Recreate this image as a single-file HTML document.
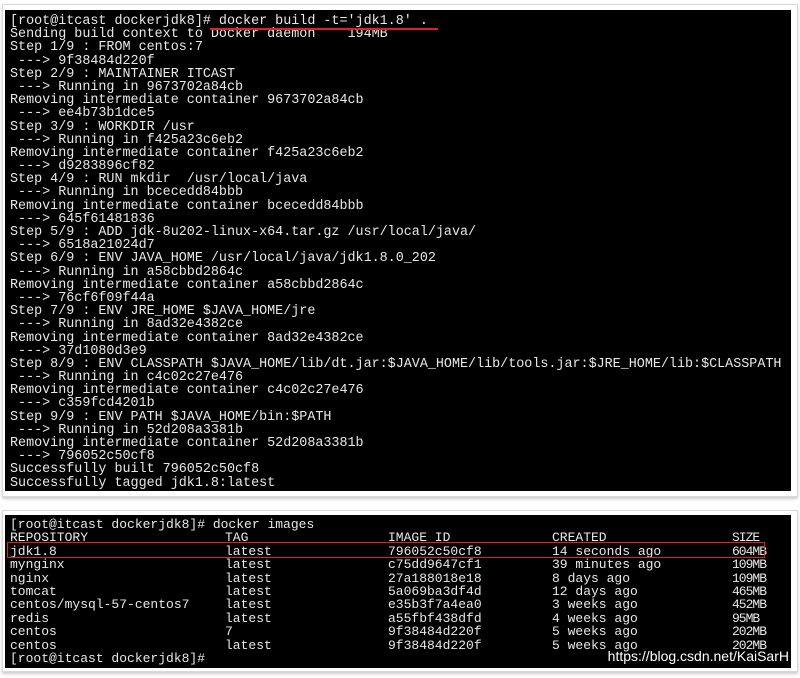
<!DOCTYPE html>
<html><head><meta charset="utf-8"><style>
body{margin:0;width:800px;height:678px;background:#fff;position:relative;overflow:hidden}
.fr{position:absolute;border:1px solid #d8d8d8;box-shadow:0 2px 3px #ccc;background:#fff}
.term{position:absolute;background:#000;color:#e8e8e8;font-family:"Liberation Mono",monospace;white-space:pre}
#t1{left:5px;top:10px;width:786px;height:481px;font-size:13.4px;line-height:13.2px;padding-top:5px;box-sizing:border-box}
#t1 div{padding-left:5px;height:13.2px}
#t2{left:5px;top:515px;width:786px;height:153px;font-size:13px}
.r{position:absolute;height:13.4px;left:0;width:786px}
.r span{position:absolute;top:0}
.r span:nth-child(5){letter-spacing:-1px}
</style></head><body>
<div class="fr" style="left:2px;top:4px;width:794px;height:491px"></div>
<div class="term" id="t1"><div>[root@itcast dockerjdk8]# docker build -t='jdk1.8' .</div><div>Sending build context to Docker daemon    194MB</div><div>Step 1/9 : FROM centos:7</div><div> ---> 9f38484d220f</div><div>Step 2/9 : MAINTAINER ITCAST</div><div> ---> Running in 9673702a84cb</div><div>Removing intermediate container 9673702a84cb</div><div> ---> ee4b73b1dce5</div><div>Step 3/9 : WORKDIR /usr</div><div> ---> Running in f425a23c6eb2</div><div>Removing intermediate container f425a23c6eb2</div><div> ---> d9283896cf82</div><div>Step 4/9 : RUN mkdir  /usr/local/java</div><div> ---> Running in bcecedd84bbb</div><div>Removing intermediate container bcecedd84bbb</div><div> ---> 645f61481836</div><div>Step 5/9 : ADD jdk-8u202-linux-x64.tar.gz /usr/local/java/</div><div> ---> 6518a21024d7</div><div>Step 6/9 : ENV JAVA_HOME /usr/local/java/jdk1.8.0_202</div><div> ---> Running in a58cbbd2864c</div><div>Removing intermediate container a58cbbd2864c</div><div> ---> 76cf6f09f44a</div><div>Step 7/9 : ENV JRE_HOME $JAVA_HOME/jre</div><div> ---> Running in 8ad32e4382ce</div><div>Removing intermediate container 8ad32e4382ce</div><div> ---> 37d1080d3e9</div><div>Step 8/9 : ENV CLASSPATH $JAVA_HOME/lib/dt.jar:$JAVA_HOME/lib/tools.jar:$JRE_HOME/lib:$CLASSPATH</div><div> ---> Running in c4c02c27e476</div><div>Removing intermediate container c4c02c27e476</div><div> ---> c359fcd4201b</div><div>Step 9/9 : ENV PATH $JAVA_HOME/bin:$PATH</div><div> ---> Running in 52d208a3381b</div><div>Removing intermediate container 52d208a3381b</div><div> ---> 796052c50cf8</div><div>Successfully built 796052c50cf8</div><div>Successfully tagged jdk1.8:latest</div></div>
<div style="position:absolute;left:210px;top:28px;width:228px;height:2px;background:#d22"></div>

<div class="fr" style="left:2px;top:510px;width:794px;height:160px"></div>
<div class="term" id="t2">
<div class="r" style="top:2px"><span style="left:5px">[root@itcast dockerjdk8]# docker images</span></div>
<div class="r" style="top:15.4px"><span style="left:5px">REPOSITORY</span><span style="left:220px">TAG</span><span style="left:383px">IMAGE ID</span><span style="left:547px">CREATED</span><span style="left:727px">SIZE</span></div>
<div class="r" style="top:28.8px"><span style="left:5px">jdk1.8</span><span style="left:220px">latest</span><span style="left:383px">796052c50cf8</span><span style="left:547px">14 seconds ago</span><span style="left:727px">604MB</span></div>
<div class="r" style="top:42.2px"><span style="left:5px">mynginx</span><span style="left:220px">latest</span><span style="left:383px">c75dd9647cf1</span><span style="left:547px">39 minutes ago</span><span style="left:727px">109MB</span></div>
<div class="r" style="top:55.6px"><span style="left:5px">nginx</span><span style="left:220px">latest</span><span style="left:383px">27a188018e18</span><span style="left:547px">8 days ago</span><span style="left:727px">109MB</span></div>
<div class="r" style="top:69px"><span style="left:5px">tomcat</span><span style="left:220px">latest</span><span style="left:383px">5a069ba3df4d</span><span style="left:547px">12 days ago</span><span style="left:727px">465MB</span></div>
<div class="r" style="top:82.4px"><span style="left:5px">centos/mysql-57-centos7</span><span style="left:220px">latest</span><span style="left:383px">e35b3f7a4ea0</span><span style="left:547px">3 weeks ago</span><span style="left:727px">452MB</span></div>
<div class="r" style="top:95.8px"><span style="left:5px">redis</span><span style="left:220px">latest</span><span style="left:383px">a55fbf438dfd</span><span style="left:547px">4 weeks ago</span><span style="left:727px">95MB</span></div>
<div class="r" style="top:109.2px"><span style="left:5px">centos</span><span style="left:220px">7</span><span style="left:383px">9f38484d220f</span><span style="left:547px">5 weeks ago</span><span style="left:727px">202MB</span></div>
<div class="r" style="top:122.6px"><span style="left:5px">centos</span><span style="left:220px">latest</span><span style="left:383px">9f38484d220f</span><span style="left:547px">5 weeks ago</span><span style="left:727px">202MB</span></div>
<div class="r" style="top:136px"><span style="left:5px">[root@itcast dockerjdk8]#</span></div>
<div style="position:absolute;right:2px;top:133px;font-family:'Liberation Sans',sans-serif;font-size:14px;color:#fff">https://blog.csdn.net/KaiSarH</div>
</div>
<div style="position:absolute;left:7px;top:542px;width:756px;height:14px;border:1px solid #d22"></div>
</body></html>
